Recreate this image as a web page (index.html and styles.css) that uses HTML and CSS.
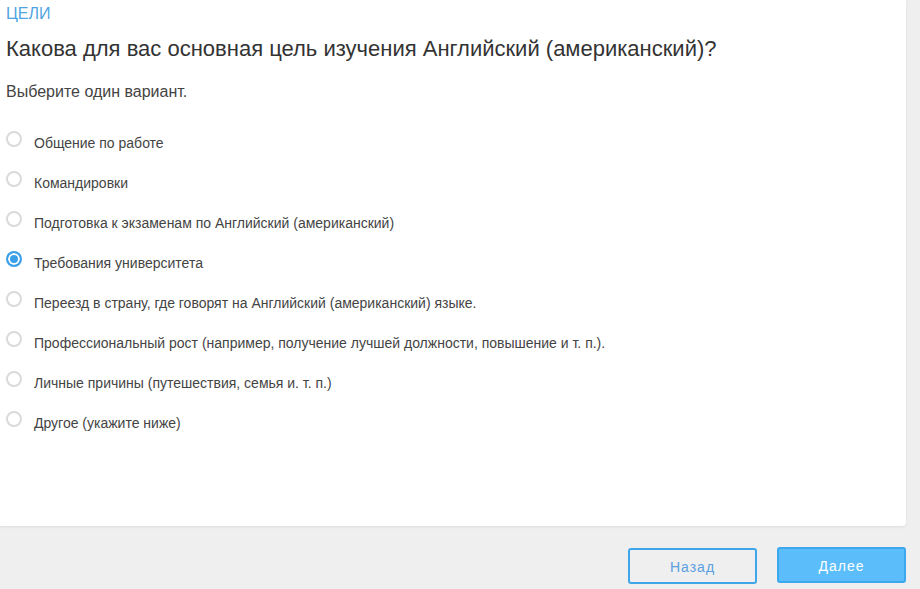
FILE: index.html
```html
<!DOCTYPE html>
<html lang="ru">
<head>
<meta charset="UTF-8">
<meta name="viewport" content="width=device-width, initial-scale=1.0">
<title>Цели</title>
<link rel="stylesheet" href="styles.css">
</head>
<body>

<!-- Question card -->
<div class="card">
  <div class="section-label">ЦЕЛИ</div>
  <h1 class="question">Какова для вас основная цель изучения Английский (американский)?</h1>
  <p class="hint">Выберите один вариант.</p>

  <ul class="options">
    <li class="option"><span class="radio"></span>Общение по работе</li>
    <li class="option"><span class="radio"></span>Командировки</li>
    <li class="option"><span class="radio"></span>Подготовка к экзаменам по Английский (американский)</li>
    <li class="option"><span class="radio checked"></span>Требования университета</li>
    <li class="option"><span class="radio"></span>Переезд в страну, где говорят на Английский (американский) языке.</li>
    <li class="option"><span class="radio"></span>Профессиональный рост (например, получение лучшей должности, повышение и т. п.).</li>
    <li class="option"><span class="radio"></span>Личные причины (путешествия, семья и. т. п.)</li>
    <li class="option"><span class="radio"></span>Другое (укажите ниже)</li>
  </ul>
</div>

<!-- Navigation -->
<div class="nav">
  <button class="btn btn-back">Назад</button>
  <button class="btn btn-next">Далее</button>
</div>

</body>
</html>
```

FILE: styles.css
```css
body {
  font-family: "Liberation Sans", Arial, sans-serif;
  margin: 0;
  padding: 0;
  background-color: #efefef;
  color: #333;
}

/* Card */
.card {
  width: 900px;
  background-color: #fff;
  padding: 3px 0 83px 6px;
  border-bottom-right-radius: 4px;
  box-shadow: 0 1px 3px rgba(0, 0, 0, 0.08);
}

.section-label {
  font-size: 16px;
  line-height: 22px;
  color: #4ea4e2;
}

.question {
  margin: 11px 0 0;
  font-size: 22px;
  line-height: 26px;
  font-weight: normal;
  color: #333;
}

.hint {
  margin: 20px 0 0;
  font-size: 16px;
  line-height: 20px;
  color: #444;
}

/* Options */
.options {
  list-style: none;
  margin: 21px 0 0;
  padding: 0;
}

.option {
  display: flex;
  align-items: flex-start;
  height: 40px;
  box-sizing: border-box;
  padding-top: 10px;
  font-size: 14px;
  line-height: 20px;
  color: #444;
}

.radio {
  flex: none;
  width: 16px;
  height: 16px;
  box-sizing: border-box;
  margin: -2px 12px 0 0;
  border: 2px solid #dadada;
  border-radius: 50%;
  background-color: #fff;
}

.radio.checked {
  border-color: #3a9fe8;
  background-color: #3a9fe8;
  box-shadow: inset 0 0 0 2px #fff;
}

/* Navigation buttons */
.nav {
  display: flex;
  justify-content: flex-end;
  gap: 20px;
  width: 906px;
  margin-top: 21px;
}

.btn {
  width: 129px;
  height: 36px;
  padding-top: 2px;
  border-radius: 3px;
  font-family: "Liberation Sans", Arial, sans-serif;
  font-size: 14px;
  letter-spacing: 1px;
  cursor: pointer;
}

.btn-back {
  margin-top: 1px;
  background-color: transparent;
  border: 2px solid #3fa6ea;
  color: #5a9fe0;
}

.btn-next {
  background-color: #5bbdfa;
  border: 2px solid #3ea8ee;
  color: #fff;
}
```
